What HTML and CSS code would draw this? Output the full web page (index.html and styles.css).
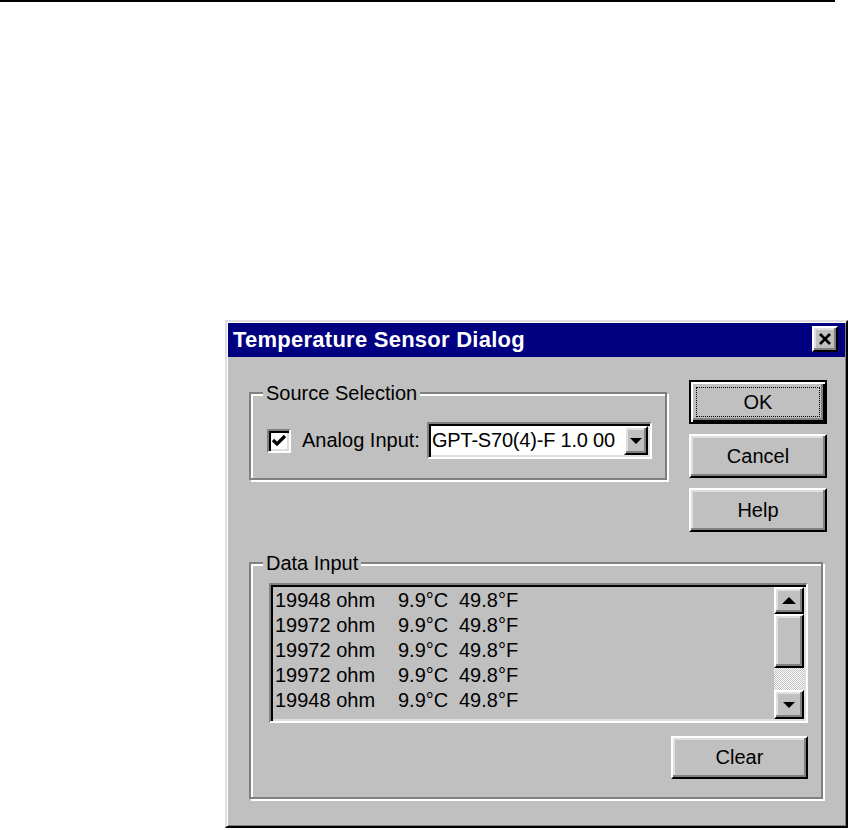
FILE: index.html
```html
<!DOCTYPE html>
<html>
<head>
  <link rel="stylesheet" href="styles.css">
</head>
<body>
  <div class="page-rule"></div>

  <div class="dialog">
    <!-- Title bar -->
    <div class="titlebar">
      <span class="title">Temperature Sensor Dialog</span>
      <button class="close-btn raised">
        <svg width="14" height="12" viewBox="0 0 14 12">
          <path d="M2 1 L12 11 M12 1 L2 11" stroke="#000" stroke-width="2.6" fill="none"/>
        </svg>
      </button>
    </div>

    <div class="dialog-body">
      <div class="top-row">
        <!-- Source Selection -->
        <fieldset class="group source-group">
          <legend>Source Selection</legend>
          <div class="source-row">
            <span class="checkbox">
              <svg width="16" height="16" viewBox="0 0 16 16">
                <path d="M2 7 L6 11 L14 3" stroke="#000" stroke-width="3.2" fill="none"/>
              </svg>
            </span>
            <span class="check-label">Analog Input:</span>
            <div class="combo">
              <span class="combo-text">GPT-S70(4)-F 1.0 00</span>
              <span class="combo-btn raised">
                <svg width="12" height="6" viewBox="0 0 12 6"><polygon points="0,0 12,0 6,6" fill="#000"/></svg>
              </span>
            </div>
          </div>
        </fieldset>

        <div class="btn-column">
          <button class="btn default-btn"><span class="focus">OK</span></button>
          <button class="btn raised">Cancel</button>
          <button class="btn raised">Help</button>
        </div>
      </div>

      <!-- Data Input -->
      <fieldset class="group data-group">
        <legend>Data Input</legend>
        <div class="listbox">
          <div class="list-items">
            <div class="list-row"><span>19948 ohm</span><span>9.9°C</span><span>49.8°F</span></div>
            <div class="list-row"><span>19972 ohm</span><span>9.9°C</span><span>49.8°F</span></div>
            <div class="list-row"><span>19972 ohm</span><span>9.9°C</span><span>49.8°F</span></div>
            <div class="list-row"><span>19972 ohm</span><span>9.9°C</span><span>49.8°F</span></div>
            <div class="list-row"><span>19948 ohm</span><span>9.9°C</span><span>49.8°F</span></div>
          </div>
          <div class="scrollbar">
            <div class="sb-btn sb-up raised">
              <svg width="14" height="7" viewBox="0 0 14 7"><polygon points="0,7 7,0 14,7" fill="#000"/></svg>
            </div>
            <div class="sb-thumb raised"></div>
            <div class="sb-track"></div>
            <div class="sb-btn sb-down raised">
              <svg width="12" height="6" viewBox="0 0 12 6"><polygon points="0,0 12,0 6,6" fill="#000"/></svg>
            </div>
          </div>
        </div>
        <div class="clear-row">
          <button class="btn clear-btn raised">Clear</button>
        </div>
      </fieldset>
    </div>
  </div>
</body>
</html>
```

FILE: styles.css
```css
* {
  margin: 0;
  padding: 0;
  box-sizing: border-box;
}

body {
  background: #fff;
  font-family: "Liberation Sans", Arial, sans-serif;
  font-size: 20px;
  color: #000;
}

.page-rule {
  width: 835px;
  height: 2px;
  background: #000;
}

/* Window frame */
.dialog {
  width: 623px;
  height: 508px;
  margin: 318px 0 0 225px;
  background: #c0c0c0;
  border: 2px solid;
  border-color: #dfdfdf #000 #000 #dfdfdf;
  padding: 1px;
  box-shadow: inset 1px 1px #fff, inset -1px -1px #808080;
  display: flex;
  flex-direction: column;
}

.raised {
  background: #c0c0c0;
  border: 2px solid;
  border-color: #fff #000 #000 #fff;
  box-shadow: inset -2px -2px #808080, inset 2px 2px #dfdfdf;
}

/* Title bar */
.titlebar {
  height: 34px;
  background: #000080;
  color: #fff;
  display: flex;
  align-items: center;
  justify-content: space-between;
  padding: 0 7px 0 5px;
}

.title {
  font-weight: bold;
  font-size: 22px;
  letter-spacing: 0.25px;
}

.close-btn {
  width: 26px;
  height: 26px;
  display: flex;
  align-items: center;
  justify-content: center;
  margin-top: -2px;
}

/* Body */
.dialog-body {
  flex: 1;
  padding: 23px 18px 0 21px;
  display: flex;
  flex-direction: column;
}

.top-row {
  display: flex;
  align-items: flex-start;
  gap: 22px;
}

/* Group boxes */
.group {
  border: 2px solid #808080;
  box-shadow: inset 2px 2px #fff, 2px 2px #fff;
  min-width: 0;
}

.group legend {
  background: #c0c0c0;
  line-height: 22px;
  padding: 0 3px;
  margin-left: -4px;
}

.source-group {
  width: 418px;
  margin-top: 2px;
  padding: 18px 13px 19px 16px;
}

.source-row {
  display: flex;
  align-items: center;
  height: 37px;
}

.checkbox {
  width: 24px;
  height: 24px;
  background: #fff;
  border: 2px solid;
  border-color: #808080 #fff #fff #808080;
  box-shadow: inset 2px 2px #000, inset -2px -2px #dfdfdf;
  display: flex;
  align-items: center;
  justify-content: center;
}

.check-label {
  margin-left: 11px;
}

.combo {
  width: 225px;
  height: 37px;
  margin-left: auto;
  background: #fff;
  border: 2px solid;
  border-color: #808080 #fff #fff #808080;
  box-shadow: inset 2px 2px #000, inset -2px -2px #dfdfdf;
  padding: 2px;
  display: flex;
}

.combo-text {
  flex: 1;
  min-width: 0;
  overflow: hidden;
  white-space: nowrap;
  padding-left: 1px;
  letter-spacing: -0.2px;
  line-height: 29px;
}

.combo-btn {
  width: 24px;
  flex-shrink: 0;
  display: flex;
  align-items: center;
  justify-content: center;
}

/* Push buttons */
.btn {
  font: inherit;
  color: #000;
  width: 138px;
  height: 44px;
  display: flex;
  align-items: center;
  justify-content: center;
}

.btn-column {
  display: flex;
  flex-direction: column;
  gap: 10px;
}

.default-btn {
  background: #c0c0c0;
  border: 2px solid #000;
  box-shadow: inset 2px 2px #fff, inset -2px -2px #000, inset -4px -4px #808080;
  padding: 5px;
}

.default-btn .focus {
  flex: 1;
  align-self: stretch;
  border: 1px dotted #000;
  display: flex;
  align-items: center;
  justify-content: center;
}

/* Data input */
.data-group {
  width: 574px;
  margin-top: 20px;
  padding: 9px 13px 18px 18px;
}

.data-group legend {
  margin-left: -6px;
}

.listbox {
  height: 140px;
  border: 2px solid;
  border-color: #808080 #fff #fff #808080;
  box-shadow: inset 2px 2px #000, inset -2px -2px #dfdfdf;
  padding: 2px;
  display: flex;
}

.list-items {
  flex: 1;
  padding: 1px 0 0 2px;
  line-height: 25px;
}

.list-row {
  display: grid;
  grid-template-columns: 123px 61px auto;
}

.scrollbar {
  width: 30px;
  display: flex;
  flex-direction: column;
}

.sb-btn {
  display: flex;
  align-items: center;
  justify-content: center;
}

.sb-up {
  height: 27px;
}

.sb-thumb {
  height: 54px;
}

.sb-track {
  flex: 1;
  background: repeating-conic-gradient(#fff 0 25%, #c0c0c0 0 50%) 0 0 / 2px 2px;
}

.sb-down {
  height: 29px;
}

.clear-row {
  display: flex;
  justify-content: flex-end;
  margin-top: 13px;
}

.clear-btn {
  width: 137px;
  height: 43px;
}
```
